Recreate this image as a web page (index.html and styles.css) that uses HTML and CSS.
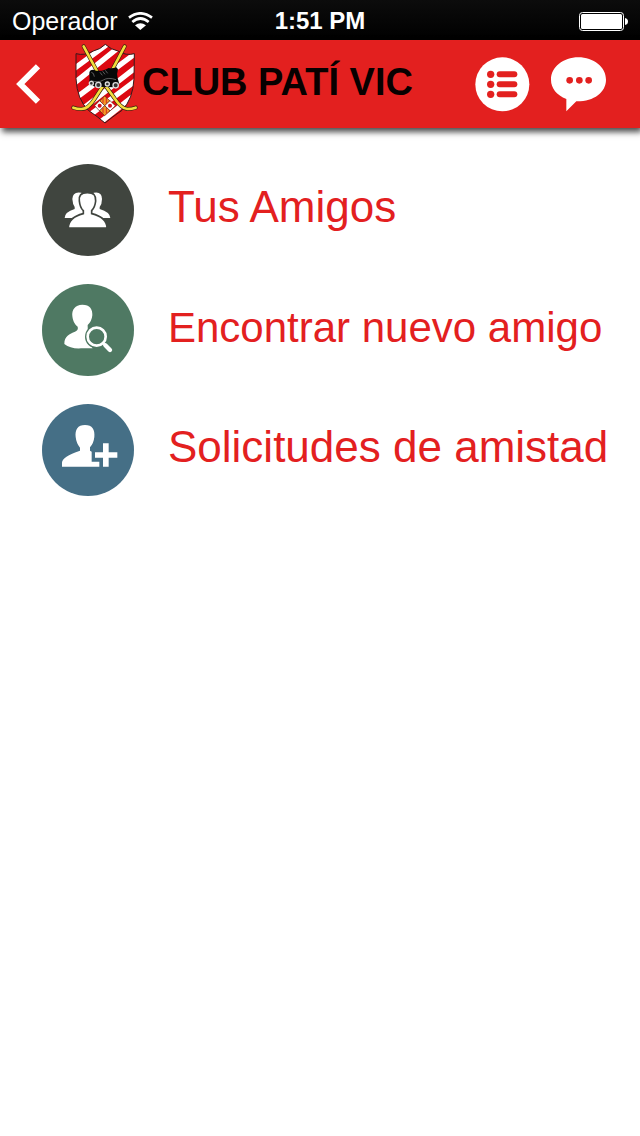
FILE: index.html
```html
<!DOCTYPE html>
<html lang="es">
<head>
<meta charset="utf-8">
<meta name="viewport" content="width=device-width, initial-scale=1">
<title>Club Patí Vic</title>
<link rel="stylesheet" href="styles.css">
</head>
<body>
<div class="status">
  <div class="carrier">
    <span>Operador</span>
    <svg class="wifi" viewBox="0 0 75 54" aria-hidden="true">
      <path d="M3 17Q37-9 72 17" fill="none" stroke="#fff" stroke-width="8"/>
      <path d="M13 30Q37 9 62 30" fill="none" stroke="#fff" stroke-width="8"/>
      <path d="M21 40Q37 27 54 40L37 54Z" fill="#fff"/>
    </svg>
  </div>
  <time class="time">1:51 PM</time>
  <svg class="battery" viewBox="0 0 50 20" role="img" aria-label="Batería">
    <rect x="1.500" y="1.500" width="44" height="18" rx="3" fill="#000" stroke="#fff"/>
    <rect x="3" y="3" width="41" height="15" rx="1.500" fill="#fff"/>
    <path d="M47 7Q50 7.500 50 10.500T47 14Z" fill="#fff"/>
  </svg>
</div>

<header class="bar">
  <button class="back" type="button" aria-label="Atrás">
    <svg class="chevron" viewBox="0 0 72 120" aria-hidden="true">
      <path d="M66 7L13 60L66 113" fill="none" stroke="#fff" stroke-width="18"/>
    </svg>
  </button>
  <svg class="crest" viewBox="0 0 228 264" aria-hidden="true">
    <defs>
      <clipPath id="shield"><path d="M36 41Q62 48 88 33Q109 28 124 13Q141 29 162 33Q186 48 211 41L210 116Q207 178 174 211Q145 231 123 249Q101 230 73 211Q39 178 36 116Z"/></clipPath>
    </defs>
    <g clip-path="url(#shield)">
      <path fill="#dc0811" d="M30 5h190v250H30z"/>
      <path stroke="#fff" stroke-width="16" d="M30 86L140 5M30 130L184 6M30 178L220 36M34 224L225 75M60 238L228 112M82 268L230 151"/>
    </g>
    <path d="M36 41Q62 48 88 33Q109 28 124 13Q141 29 162 33Q186 48 211 41L210 116Q207 178 174 211Q145 231 123 249Q101 230 73 211Q39 178 36 116Z" fill="none" stroke="#35191b" stroke-width="3"/>
    <g fill="none" stroke-linecap="round" stroke-linejoin="round">
      <path d="M59 19L117 127L151 174Q172 206 190 207Q204 207 215 203" stroke="#33250c" stroke-width="12"/>
      <path d="M59 19L117 127L151 174Q172 206 190 207Q204 207 215 203" stroke="#f4dc3d" stroke-width="8"/>
      <path d="M182 19L128 121L91 178Q73 207 52 207Q38 207 28 203" stroke="#33250c" stroke-width="12"/>
      <path d="M182 19L128 121L91 178Q73 207 52 207Q38 207 28 203" stroke="#f4dc3d" stroke-width="8"/>
    </g>
    <path d="M76 99Q76 89 88 89Q100 94 113 92Q127 89 134 84Q146 86 157 82L162 88Q157 103 161 115L166 132L154 142L92 140L75 129Q78 117 76 99Z" fill="#080808"/>
    <path d="M82 97Q90 98 91 110M108 97L115 106M116 94L123 103M124 91L131 100M80 122Q104 129 118 120T156 119" fill="none" stroke="#888" stroke-width="2"/>
    <g fill="#333" stroke="#ddd" stroke-width="4">
      <circle cx="82" cy="130" r="6"/><circle cx="103" cy="135" r="8"/><circle cx="130" cy="132" r="6"/><circle cx="155" cy="136" r="8"/>
    </g>
    <g stroke="#5c2116" stroke-width="2">
      <path fill="#f39a27" d="M122 168L138 183L122 197L107 183Z"/>
      <path fill="#fff" d="M107 182L122 197L107 213L92 197ZM138 182L154 197L138 213L122 197Z"/>
      <path fill="#f39a27" d="M122 197L138 212L122 227L107 212Z"/>
    </g>
    <path d="M117 174V190M127 174V190M117 204V220M127 204V220" stroke="#d52b1d" stroke-width="3"/>
    <circle cx="107" cy="197" r="6" fill="#d5101c"/><circle cx="138" cy="197" r="6" fill="#d5101c"/>
  </svg>
  <h1 class="title">CLUB PATÍ VIC</h1>
  <div class="actions">
    <button class="action" type="button" aria-label="Menú">
      <svg class="glyph" viewBox="0 0 165 165" aria-hidden="true">
        <circle cx="82" cy="82" r="81" fill="#fff"/>
        <g fill="#e3201f">
          <circle cx="47" cy="52" r="11"/><circle cx="47" cy="82" r="11"/><circle cx="47" cy="112" r="11"/>
          <rect x="65" y="43" width="62" height="18" rx="9"/><rect x="65" y="73" width="62" height="18" rx="9"/><rect x="65" y="103" width="62" height="18" rx="9"/>
        </g>
      </svg>
    </button>
    <button class="action" type="button" aria-label="Mensajes">
      <svg class="glyph" viewBox="0 0 165 165" aria-hidden="true">
        <path d="M82 1C128 1 165 30 165 68C165 106 128 134 76 133L46 163V126C17 114 0 94 0 68C0 30 37 1 82 1Z" fill="#fff"/>
        <g fill="#e3201f"><circle cx="56" cy="70" r="10"/><circle cx="85" cy="70" r="10"/><circle cx="113" cy="70" r="10"/></g>
      </svg>
    </button>
  </div>
</header>

<main>
  <ul class="menu">
    <li><a class="item" href="#amigos">
      <svg class="badge" viewBox="20 27 276 276" aria-hidden="true">
        <circle cx="158" cy="165" r="138" fill="#40453f"/>
        <path fill="#fff" d="M138 113Q112 108 111 132Q112 147 118 156V162Q88 171 88 189H110L144 174V124Z"/>
        <path fill="#fff" d="M175 113Q200 108 200 132Q200 147 193 156V162Q224 171 225 189H203L169 174V124Z"/>
        <path fill="#fff" stroke="#40453f" stroke-width="5" d="M156 113C136 113 130 122 132 138Q134 158 144 167V176Q99 187 99 219H215Q215 187 169 176V167Q179 157 181 138C182 121 176 113 156 113Z"/>
      </svg>
      <span class="label">Tus Amigos</span>
    </a></li>
    <li><a class="item" href="#encontrar">
      <svg class="badge" viewBox="20 27 276 276" aria-hidden="true">
        <circle cx="158" cy="165" r="138" fill="#4f7963"/>
        <path fill="#fff" d="M141 89C119 89 109 105 111 123C113 141 121 151 127 155Q130 165 119 170C103 177 87 183 87 207Q106 222 137 220H172L158 198L157 150Q169 140 171 121C172 103 164 89 141 89Z"/>
        <circle cx="184" cy="185" r="29" fill="#4f7963" stroke="#4f7963" stroke-width="12"/>
        <circle cx="184" cy="185" r="27" fill="none" stroke="#fff" stroke-width="8"/>
        <path d="M203 204L209 210" stroke="#fff" stroke-width="7"/>
        <path d="M210 211L224 225" stroke="#fff" stroke-width="13" stroke-linecap="round"/>
      </svg>
      <span class="label label-long">Encontrar nuevo amigo</span>
    </a></li>
    <li><a class="item" href="#solicitudes">
      <svg class="badge" viewBox="20 27 276 276" aria-hidden="true">
        <circle cx="158" cy="165" r="138" fill="#456f86"/>
        <path fill="#fff" d="M149 90C127 90 119 104 121 126Q123 145 134 158V167Q80 185 80 203V215H192V200H169V170L164 167V157Q175 145 177 126C179 104 171 90 149 90Z"/>
        <path d="M203 145H220V172H246V188H220V215H203V188H179V172H203Z" fill="#fff"/>
      </svg>
      <span class="label">Solicitudes de amistad</span>
    </a></li>
  </ul>
</main>
</body>
</html>
```
FILE: styles.css
```css
* { box-sizing: border-box; }

body {
  margin: 0;
  min-height: 100vh;
  background: #fff;
  font-family: "Liberation Sans", Arial, sans-serif;
}

button {
  padding: 0;
  border: 0;
  background: none;
  cursor: pointer;
}

svg { display: block; }

.status {
  display: grid;
  grid-template-columns: 1fr auto 1fr;
  align-items: center;
  height: 40px;
  padding: 2px 12px 0;
  background: linear-gradient(#0c0c0c, #000);
  color: #fff;
  font-size: 25px;
}

.carrier {
  display: flex;
  align-items: center;
  gap: 10px;
}

.wifi { width: 25px; height: 18px; }

.time { font-size: 24px; font-weight: 700; }

.battery {
  width: 50px;
  height: 20px;
  justify-self: end;
}

.bar {
  display: flex;
  align-items: center;
  height: 88px;
  padding-right: 34px;
  background: #e3201f;
  box-shadow: 2px 4px 6px rgba(0, 0, 0, 0.7);
}

.back {
  flex: none;
  width: 64px;
  height: 88px;
  padding-left: 16px;
}

.chevron { width: 24px; height: 40px; }

.crest { flex: none; width: 76px; height: 88px; }

.title {
  flex: 1;
  margin: 0;
  padding: 0 0 4px 2px;
  color: #080000;
  font-size: 38px;
  font-weight: 700;
  white-space: nowrap;
}

.actions { display: flex; gap: 21px; }

.glyph { width: 55px; height: 55px; }

.menu {
  margin: 0;
  padding: 22px 0 0;
  list-style: none;
}

.item {
  display: flex;
  align-items: center;
  gap: 34px;
  min-height: 120px;
  padding-left: 42px;
  color: #e3201f;
  text-decoration: none;
}

.badge { flex: none; width: 92px; height: 92px; }

.label {
  padding-bottom: 6px;
  font-size: 44px;
}

.label-long {
  padding-bottom: 4px;
  font-size: 42px;
}
```
